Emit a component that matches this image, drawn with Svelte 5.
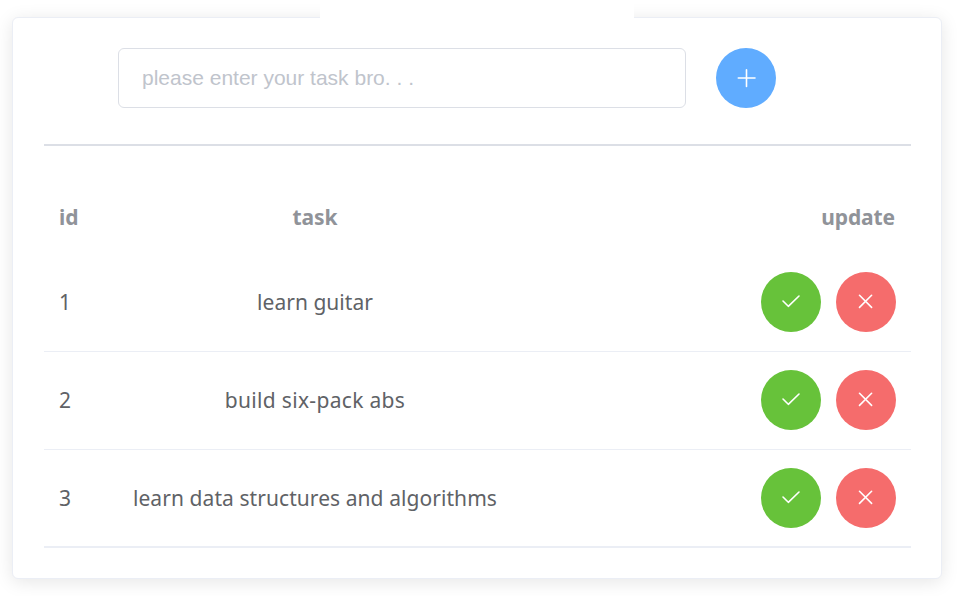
<script>
  let draft = $state('');
  let tasks = $state([
    { id: 1, name: 'learn guitar', spacing: 0.03 },
    { id: 2, name: 'build six-pack abs', spacing: 0.32 },
    { id: 3, name: 'learn data structures and algorithms', spacing: 0.07 }
  ]);

  function add() {
    const name = draft.trim();
    if (!name) return;
    tasks.push({ id: tasks.length + 1, name, spacing: 0 });
    draft = '';
  }

  function remove(id) {
    tasks = tasks.filter((t) => t.id !== id);
  }
</script>

<div class="page">
  <div class="tab"></div>
  <main class="card">
    <div class="entry">
      <input type="text" bind:value={draft} placeholder="please enter your task bro. . ." />
      <button class="round add" aria-label="Add task" onclick={add}>
        <svg viewBox="0 0 60 60"><path d="M22.3 30H39M30.5 21.7V38.5" /></svg>
      </button>
    </div>
    <div class="divider"></div>
    <div class="table">
      <div class="row head">
        <span>id</span>
        <span class="task">task</span>
        <span class="end">update</span>
      </div>
      {#each tasks as task (task.id)}
        <div class="row">
          <span>{task.id}</span>
          <span class="task" style:letter-spacing="{task.spacing}px">{task.name}</span>
          <div class="end actions">
            <button class="round done" aria-label="Done" onclick={() => remove(task.id)}>
              <svg viewBox="0 0 60 60"><path d="M22 29L27.3 34.3L38 24" /></svg>
            </button>
            <button class="round delete" aria-label="Delete" onclick={() => remove(task.id)}>
              <svg viewBox="0 0 60 60"><path d="M23.5 23.3L35.6 35.4M35.6 23.3L23.5 35.4" /></svg>
            </button>
          </div>
        </div>
      {/each}
    </div>
  </main>
</div>

<style>
  :global(body) {
    background: #fff;
  }
  .page {
    position: relative;
    box-sizing: border-box;
    width: 957px;
    height: 596px;
    padding: 17px 15px 17px 12px;
    overflow: hidden;
    font-family: 'Segoe UI', 'Noto Sans', sans-serif;
    font-size: 21px;
    color: #606266;
  }
  .tab {
    position: absolute;
    z-index: 1;
    top: 0;
    left: 320px;
    width: 314px;
    height: 18px;
    background: #fff;
  }
  .card {
    box-sizing: border-box;
    height: 562px;
    padding: 30px 30px 0 31px;
    border: 1px solid #ebeef5;
    border-radius: 6px;
    background: #fff;
    box-shadow: 0 3px 18px rgba(0, 0, 0, 0.1);
  }
  .entry {
    display: flex;
    gap: 30px;
    padding-left: 74px;
  }
  input {
    box-sizing: border-box;
    width: 568px;
    height: 60px;
    padding: 0 23px;
    border: 1px solid #dcdfe6;
    border-radius: 6px;
    outline: none;
    background: #fff;
    font: 21px 'Liberation Sans', Arial, sans-serif;
    color: #606266;
  }
  input::placeholder {
    color: #c0c4cc;
    opacity: 1;
  }
  .divider {
    height: 2px;
    margin-top: 36px;
    background: #dcdfe6;
  }
  .table {
    padding-top: 35px;
  }
  .row {
    display: grid;
    grid-template-columns: 60px 392px 1fr;
    grid-template-rows: 60px;
    align-items: center;
    box-sizing: border-box;
    height: 98px;
    padding: 18px 15px 0;
    border-bottom: 1px solid #ebeef5;
  }
  .row:last-child {
    border-bottom-width: 2px;
  }
  .head {
    height: 73px;
    padding: 6px 16px 0 15px;
    border-bottom: 0;
    font-weight: 700;
    letter-spacing: -0.1px;
    color: #909399;
  }
  .task {
    text-align: center;
    white-space: nowrap;
  }
  .end {
    text-align: right;
  }
  .actions {
    display: flex;
    justify-content: flex-end;
    gap: 15px;
  }
  .round {
    flex: none;
    width: 60px;
    height: 60px;
    padding: 0;
    border: 0;
    border-radius: 50%;
    cursor: pointer;
  }
  .round svg {
    display: block;
    width: 60px;
    height: 60px;
    fill: none;
    stroke: #fff;
    stroke-width: 1.6;
    stroke-linecap: round;
    stroke-linejoin: round;
  }
  .add {
    background: #60acff;
  }
  .done {
    background: #67c23a;
  }
  .delete {
    background: #f56c6c;
  }
</style>
